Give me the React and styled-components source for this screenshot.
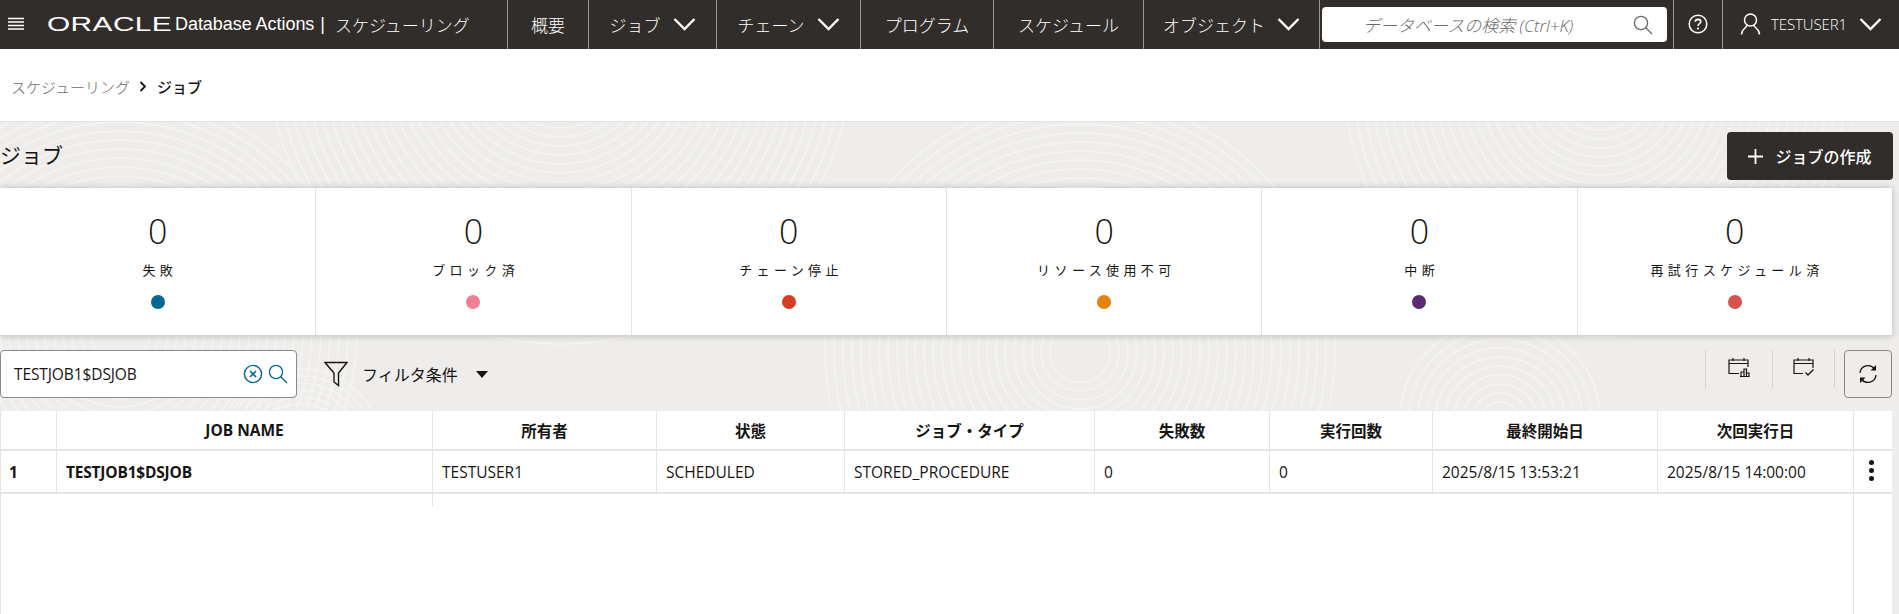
import React from "react";
import styled, { createGlobalStyle } from "styled-components";

const Global = createGlobalStyle`
  html, body { margin: 0; padding: 0; height: 100%; background: #fff; overflow: hidden; }
  #root { height: 100%; }
  * { box-sizing: border-box; }
`;

const FONT = `"Open Sans", "Noto Sans CJK JP", sans-serif`;

const Page = styled.div`
  height: 614px;
  display: flex;
  flex-direction: column;
  font-family: ${FONT};
  color: #161513;
`;

const Header = styled.header`
  height: 49px;
  flex: none;
  display: flex;
  background: #312d2a;
  color: #fff;
`;

const Brand = styled.div`
  width: 507px;
  flex: none;
  display: flex;
  align-items: center;
  padding: 0 0 1px 8px;
`;

const Burger = styled.svg`
  width: 16px;
  height: 14px;
  flex: none;
  margin-right: 23px;
`;

const LogoBox = styled.span`
  width: 128px;
  height: 24px;
  flex: none;
  display: block;
  position: relative;
`;

const LogoWord = styled.span`
  position: absolute;
  left: 0;
  top: -1px;
  font-family: "Liberation Sans", sans-serif;
  font-size: 21px;
  line-height: 26px;
  font-weight: 400;
  letter-spacing: 0.3px;
  transform: scaleX(1.42);
  transform-origin: left center;
  white-space: nowrap;
`;

const Product = styled.span`
  font-family: "Liberation Sans", sans-serif;
  font-size: 18px;
  letter-spacing: -0.05px;
  white-space: nowrap;
`;

const Pipe = styled.span`
  font-family: "Liberation Sans", sans-serif;
  font-size: 18px;
  margin-left: 6px;
`;

const AppName = styled.span`
  font-family: "Noto Sans CJK JP", sans-serif;
  font-size: 17px;
  font-weight: 300;
  margin-left: 10px;
  white-space: nowrap;
`;

const NavItem = styled.div`
  width: ${(p) => p.$w}px;
  flex: none;
  display: flex;
  align-items: center;
  justify-content: center;
  gap: ${(p) => p.$gap || 12}px;
  border-left: 1px solid #9a9896;
  font-family: "Noto Sans CJK JP", sans-serif;
  font-size: 17px;
  font-weight: 300;
  white-space: nowrap;
  padding-bottom: 1px;
`;

const SearchCell = styled.div`
  width: 354px;
  flex: none;
  display: flex;
  align-items: flex-start;
  border-left: 1px solid #9a9896;
  padding: 7px 6px 0 2px;
`;

const SearchBox = styled.div`
  width: 345px;
  height: 35px;
  background: #fff;
  border-radius: 4px;
  display: flex;
  align-items: center;
  justify-content: space-between;
  padding: 0 14px 0 41px;
  color: #6b6967;
  font-size: 17px;
  font-style: italic;
  font-weight: 300;
  white-space: nowrap;
`;

const UserCell = styled.div`
  flex: 1;
  display: flex;
  align-items: center;
  border-left: 1px solid #9a9896;
  padding: 0 12px 1px 17px;
  font-size: 15px;
  font-weight: 300;
`;

const UserName = styled.span`
  margin: 0 12px 0 10px;
  letter-spacing: -0.1px;
`;

const Crumbs = styled.nav`
  height: 72px;
  flex: none;
  display: flex;
  align-items: center;
  gap: 9px;
  padding: 2px 0 0 11px;
  font-size: 15px;
  font-family: "Noto Sans CJK JP", sans-serif;
`;

const CrumbLink = styled.span`
  color: #6b6967;
  font-weight: 300;
`;

const CrumbNow = styled.span`
  color: #161513;
  font-weight: 500;
  margin-left: 1px;
`;

const Surface = styled.main`
  position: relative;
  flex: 1;
  min-height: 0;
  display: flex;
  flex-direction: column;
  background: #eeedeb;
  border-top: 1px solid #e3e2e0;
  overflow: hidden;
`;

const Texture = styled.svg`
  position: absolute;
  inset: 0;
  width: 100%;
  height: 100%;
  pointer-events: none;
`;

const TitleBar = styled.div`
  position: relative;
  height: 66px;
  flex: none;
  display: flex;
  align-items: center;
  justify-content: space-between;
  padding: 0 6px 0 0;
`;

const Title = styled.h1`
  margin: 0;
  font-family: "Noto Sans CJK JP", sans-serif;
  font-size: 21px;
  font-weight: 400;
  line-height: 1;
  padding-bottom: 1px;
`;

const CreateButton = styled.button`
  width: 166px;
  height: 48px;
  margin-top: 2px;
  border: 0;
  border-radius: 4px;
  background: #312d2a;
  color: #fff;
  font-family: "Noto Sans CJK JP", sans-serif;
  font-size: 16px;
  font-weight: 500;
  display: flex;
  align-items: center;
  justify-content: center;
  gap: 12px;
  padding: 0;
`;

const Cards = styled.section`
  position: relative;
  height: 148px;
  flex: none;
  margin-right: 7px;
  display: grid;
  grid-template-columns: repeat(6, 1fr);
  background: #fff;
  box-shadow: 0 0 7px rgba(0, 0, 0, 0.22);
  border-bottom: 1px solid #d4d3d1;
`;

const Card = styled.div`
  display: flex;
  flex-direction: column;
  align-items: center;
  border-left: ${(p) => (p.$first ? "0" : "1px solid #e4e3e1")};
`;

const Count = styled.div`
  margin-top: 20px;
  font-size: 34px;
  font-weight: 300;
  line-height: 46px;
`;

const CardLabel = styled.div`
  margin-top: 6px;
  font-family: "Noto Sans CJK JP", sans-serif;
  font-size: 13px;
  line-height: 20px;
  letter-spacing: 4.4px;
  text-indent: 4.4px;
  white-space: nowrap;
`;

const Dot = styled.span`
  width: 14px;
  height: 14px;
  margin-top: 15px;
  border-radius: 50%;
  background: ${(p) => p.$c};
`;

const Toolbar = styled.div`
  position: relative;
  height: 75px;
  flex: none;
  margin-right: 7px;
  display: flex;
  align-items: flex-start;
  padding-top: 14px;
`;

const FilterInput = styled.div`
  width: 297px;
  height: 48px;
  background: #fff;
  border: 1px solid #8a8987;
  border-radius: 4px;
  display: flex;
  align-items: center;
  padding: 0 8px 0 13px;
  font-size: 15.5px;
  letter-spacing: -0.1px;
`;

const FilterValue = styled.span`
  flex: 1;
`;

const FilterToggle = styled.div`
  display: flex;
  align-items: center;
  height: 48px;
  margin-left: 27px;
  font-family: "Noto Sans CJK JP", sans-serif;
  font-size: 16px;
  font-weight: 400;
`;

const FilterLabel = styled.span`
  margin: 0 18px 0 14px;
`;

const Caret = styled.span`
  width: 0;
  height: 0;
  border-left: 6px solid transparent;
  border-right: 6px solid transparent;
  border-top: 7px solid #161513;
`;

const Tools = styled.div`
  margin-left: auto;
  display: flex;
  align-items: flex-start;
`;

const ToolIcon = styled.div`
  width: ${(p) => p.$w}px;
  height: 38px;
  border-left: 1px solid #d4d3d1;
  display: flex;
  align-items: center;
  justify-content: center;
  padding-bottom: 4px;
`;

const ToolSep = styled.div`
  width: 10px;
  height: 38px;
  border-left: 1px solid #d4d3d1;
`;

const RefreshButton = styled.div`
  width: 48px;
  height: 48px;
  border: 1px solid #8a8987;
  border-radius: 4px;
  display: flex;
  align-items: center;
  justify-content: center;
`;

const Grid = styled.div`
  position: relative;
  flex: 1;
  margin-right: 7px;
  background: #fff;
  border-left: 1px solid #e4e3e1;
  display: flex;
  flex-direction: column;
`;

const COLUMNS = "55px 376px 224px 188px 250px 175px 163px 225px 196px 38px";

const Row = styled.div`
  display: grid;
  grid-template-columns: ${COLUMNS};
  height: ${(p) => p.$h}px;
  flex: none;
  border-bottom: 2px solid #e6e5e3;
`;

const HeadCell = styled.div`
  display: flex;
  align-items: center;
  justify-content: center;
  border-left: ${(p) => (p.$first ? "0" : "1px solid #e6e5e3")};
  font-family: ${FONT};
  font-size: 15.5px;
  font-weight: 700;
  padding-left: ${(p) => p.$shift || 0}px;
`;

const Cell = styled.div`
  display: flex;
  align-items: center;
  padding-left: ${(p) => (p.$first ? 8 : 9)}px;
  border-left: ${(p) => (p.$first ? "0" : "1px solid #e6e5e3")};
  font-size: 15.5px;
  font-weight: ${(p) => (p.$bold ? 700 : 400)};
  white-space: nowrap;
  letter-spacing: ${(p) => (p.$bold ? "-0.2px" : "0")};
`;

const MenuCell = styled(Cell)`
  padding: 0 0 2px 0;
  justify-content: center;
`;

const Kebab = styled.span`
  display: flex;
  flex-direction: column;
  gap: 3px;
  margin-right: 3px;
`;

const KebabDot = styled.i`
  display: block;
  width: 5px;
  height: 5px;
  border-radius: 50%;
  background: #161513;
`;

const Rest = styled.div`
  flex: 1;
  display: grid;
  grid-template-columns: ${COLUMNS};
`;

const Stub = styled.div`
  height: 12px;
  grid-column: 3;
  border-left: 1px solid #e6e5e3;
`;

const ActionRail = styled.div`
  grid-column: 10;
  grid-row: 1;
  border-left: 1px solid #e6e5e3;
  height: 100%;
`;

const Chevron = () => (
  <svg width="23" height="14" viewBox="0 0 23 14" fill="none">
    <path d="M1.5 2 L11.5 12 L21.5 2" stroke="#fff" strokeWidth="2.4" />
  </svg>
);

const Magnifier = ({ color, size = 20 }) => (
  <svg width={size} height={size} viewBox="0 0 20 20" fill="none" stroke={color} strokeWidth="1.3">
    <circle cx="8" cy="8" r="6.6" />
    <path d="M12.8 12.8 L19 19" />
  </svg>
);

const CARDS = [
  ["失敗", "#04688f"],
  ["ブロック済", "#f0808f"],
  ["チェーン停止", "#d63b25"],
  ["リソース使用不可", "#e1830e"],
  ["中断", "#5a2b72"],
  ["再試行スケジュール済", "#d5524f"],
];

const HEADERS = [
  ["", 0],
  ["JOB NAME", 0],
  ["所有者", 0],
  ["状態", 0],
  ["ジョブ・タイプ", 0],
  ["失敗数", 0],
  ["実行回数", 0],
  ["最終開始日", 0],
  ["次回実行日", 0],
  ["", 0],
];

const CELLS = ["TESTUSER1", "SCHEDULED", "STORED_PROCEDURE", "0", "0", "2025/8/15 13:53:21", "2025/8/15 14:00:00"];

const swirl = (cx, cy, from, to, step) => {
  const out = [];
  for (let r = from; r < to; r += step) {
    out.push(<circle key={`${cx}-${cy}-${r}`} cx={cx} cy={cy} r={r} />);
  }
  return out;
};

export default function App() {
  return (
    <Page>
      <Global />
      <Header>
        <Brand>
          <Burger viewBox="0 0 16 14">
            <path d="M0 1.5H16M0 5H16M0 8.5H16M0 12H16" stroke="#fff" strokeWidth="1.4" />
          </Burger>
          <LogoBox>
            <LogoWord>ORACLE</LogoWord>
          </LogoBox>
          <Product>Database Actions</Product>
          <Pipe>|</Pipe>
          <AppName>スケジューリング</AppName>
        </Brand>
        <NavItem $w={81}>概要</NavItem>
        <NavItem $w={128}>ジョブ<Chevron /></NavItem>
        <NavItem $w={144}>チェーン<Chevron /></NavItem>
        <NavItem $w={133}>プログラム</NavItem>
        <NavItem $w={150}>スケジュール</NavItem>
        <NavItem $w={176}>オブジェクト<Chevron /></NavItem>
        <SearchCell>
          <SearchBox>
            データベースの検索 (Ctrl+K)
            <Magnifier color="#6b6967" />
          </SearchBox>
        </SearchCell>
        <NavItem $w={49}>
          <svg width="20" height="20" viewBox="0 0 20 20" fill="none">
            <circle cx="10" cy="10" r="8.8" stroke="#fff" strokeWidth="1.5" />
            <path d="M7.3 7.7 C7.3 4.6 12.8 4.6 12.8 7.7 C12.8 9.7 10 9.6 10 12" stroke="#fff" strokeWidth="1.6" />
            <circle cx="10" cy="14.5" r="1.1" fill="#fff" />
          </svg>
        </NavItem>
        <UserCell>
          <svg width="21" height="22" viewBox="0 0 21 22" fill="none" stroke="#fff" strokeWidth="1.5">
            <circle cx="10.5" cy="7" r="6" />
            <path d="M7 12 C7 15 1.5 15.5 1.5 21.5 M14 12 C14 15 19.5 15.5 19.5 21.5" />
          </svg>
          <UserName>TESTUSER1</UserName>
          <Chevron />
        </UserCell>
      </Header>

      <Crumbs>
        <CrumbLink>スケジューリング</CrumbLink>
        <svg width="8" height="11" viewBox="0 0 8 11" fill="none">
          <path d="M1.5 1 L6 5.5 L1.5 10" stroke="#161513" strokeWidth="1.8" />
        </svg>
        <CrumbNow>ジョブ</CrumbNow>
      </Crumbs>

      <Surface>
        <Texture viewBox="0 0 1899 492" preserveAspectRatio="none" fill="none" stroke="#f5f4f2" strokeWidth="1.5">
          {swirl(120, 210, 30, 240, 9)}
          {swirl(560, -70, 40, 300, 9)}
          {swirl(1080, 230, 30, 260, 9)}
          {swirl(1600, -40, 30, 260, 9)}
          {swirl(1500, 300, 20, 110, 9)}
          {swirl(300, 330, 20, 90, 7)}
        </Texture>

        <TitleBar>
          <Title>ジョブ</Title>
          <CreateButton>
            <svg width="15" height="15" viewBox="0 0 15 15">
              <path d="M7.5 0V15M0 7.5H15" stroke="#fff" strokeWidth="1.8" />
            </svg>
            ジョブの作成
          </CreateButton>
        </TitleBar>

        <Cards>
          {CARDS.map(([label, color], i) => (
            <Card key={label} $first={i === 0}>
              <Count>0</Count>
              <CardLabel>{label}</CardLabel>
              <Dot $c={color} />
            </Card>
          ))}
        </Cards>

        <Toolbar>
          <FilterInput>
            <FilterValue>TESTJOB1$DSJOB</FilterValue>
            <svg width="20" height="20" viewBox="0 0 20 20" fill="none" stroke="#04688f" style={{ marginRight: 5 }}>
              <circle cx="10" cy="10" r="8.6" strokeWidth="1.4" />
              <path d="M7 7 L13 13 M13 7 L7 13" strokeWidth="1.7" />
            </svg>
            <Magnifier color="#04688f" />
          </FilterInput>
          <FilterToggle>
            <svg width="24" height="26" viewBox="0 0 24 26" fill="none" stroke="#161513" strokeWidth="1.4">
              <path d="M1 1.5 H23 L14.5 12 V24.5 L10 21 V12 Z" />
            </svg>
            <FilterLabel>フィルタ条件</FilterLabel>
            <Caret />
          </FilterToggle>
          <Tools>
            <ToolIcon $w={67}>
              <svg width="22" height="20" viewBox="0 0 22 20" fill="none" stroke="#161513" strokeWidth="1.2">
                <path d="M11 16.5 H1 V3 H20 V10 M1 6.5 H20 M5 1 V4 M16 1 V4" />
                <path d="M13 19.5 V15 H16 V19.5 M16 19.5 V12 H18.5 V19.5 M18.5 16 H21 V19.5 H12" />
              </svg>
            </ToolIcon>
            <ToolIcon $w={62}>
              <svg width="22" height="20" viewBox="0 0 22 20" fill="none" stroke="#161513" strokeWidth="1.2">
                <path d="M10 16.5 H1 V3 H20 V11 M1 6.5 H20 M5 1 V4 M16 1 V4" />
                <path d="M12.5 15.5 L15 18 L20.5 12.5" strokeWidth="1.4" />
              </svg>
            </ToolIcon>
            <ToolSep />
            <RefreshButton>
              <svg width="20" height="20" viewBox="0 0 20 20" fill="none" stroke="#161513" strokeWidth="1.3">
                <path d="M2 9 A8 8 0 0 1 16.5 5" />
                <path d="M18 11 A8 8 0 0 1 3.5 15" />
                <path d="M18 1 V6.5 H12.5 Z M2 19 V13.5 H7.5 Z" fill="#161513" stroke="none" />
              </svg>
            </RefreshButton>
          </Tools>
        </Toolbar>

        <Grid>
          <Row $h={40}>
            {HEADERS.map(([text, shift], i) => (
              <HeadCell key={i} $first={i === 0} $shift={shift}>{text}</HeadCell>
            ))}
          </Row>
          <Row $h={43}>
            <Cell $first $bold>1</Cell>
            <Cell $bold>TESTJOB1$DSJOB</Cell>
            {CELLS.map((t, i) => (
              <Cell key={i}>{t}</Cell>
            ))}
            <MenuCell>
              <Kebab>
                <KebabDot />
                <KebabDot />
                <KebabDot />
              </Kebab>
            </MenuCell>
          </Row>
          <Rest>
            <Stub />
            <ActionRail />
          </Rest>
        </Grid>
      </Surface>
    </Page>
  );
}
